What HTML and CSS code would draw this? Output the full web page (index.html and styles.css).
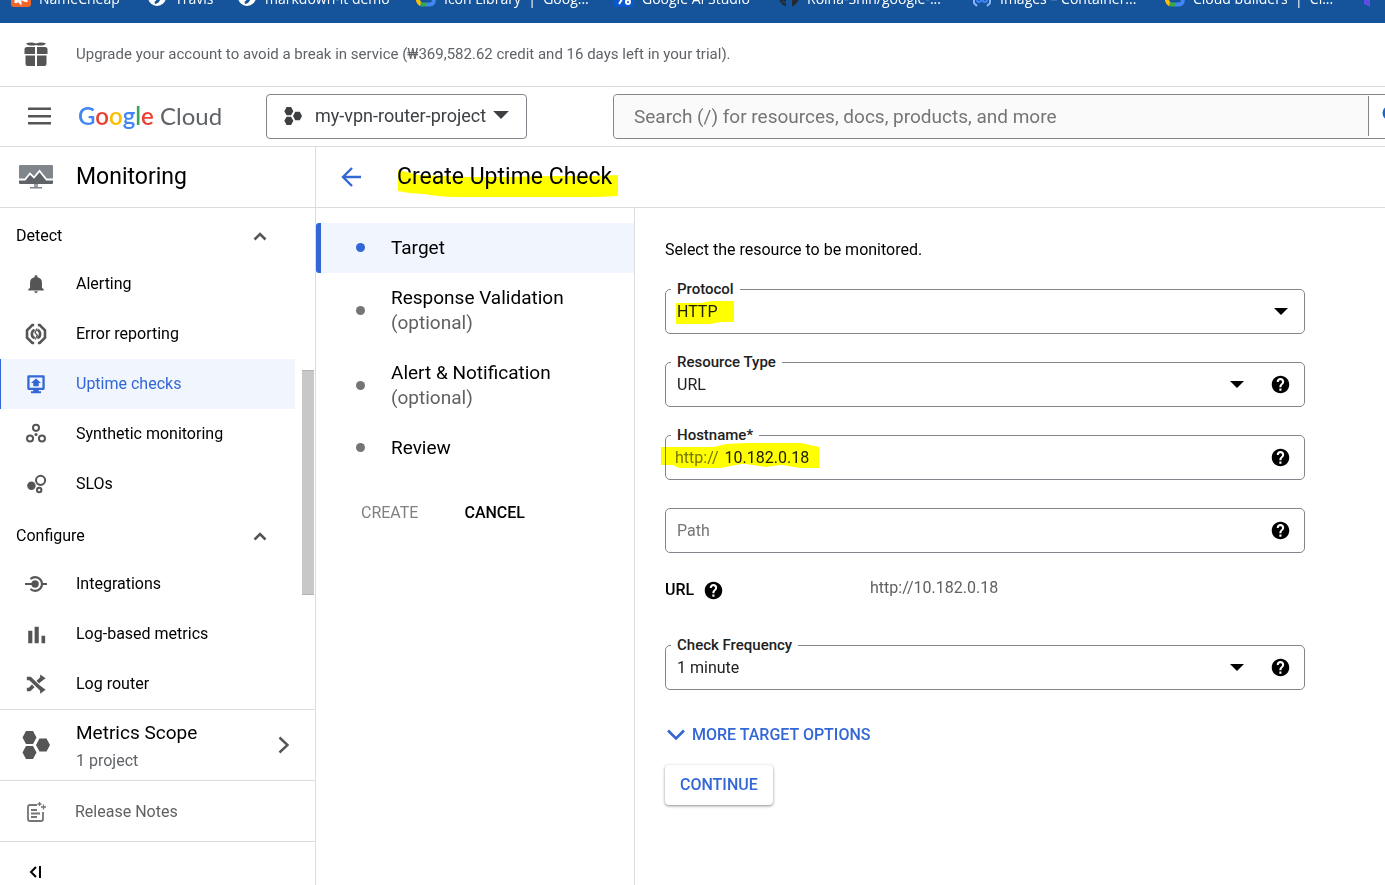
FILE: index.html
```html
<!DOCTYPE html>
<html lang="en">
<head>
<meta charset="utf-8">
<title>Create Uptime Check – Monitoring – Google Cloud</title>
<link rel="stylesheet" href="styles.css">
</head>
<body>
<svg class="sprite" aria-hidden="true">
  <symbol id="help" viewBox="0 0 24 24"><circle cx="12" cy="12" r="10" fill="#fff"/><path d="M12 2C6.480 2 2 6.480 2 12s4.480 10 10 10 10-4.480 10-10S17.520 2 12 2zm1.100 17h-2.400v-2.300h2.400V19zm2.100-7.700-.9.900c-.8.800-1.200 1.400-1.200 2.800h-2.400v-.5c0-1.100.5-2.100 1.200-2.800l1.300-1.300c.4-.3.6-.8.600-1.400 0-1.100-.8-1.900-1.900-1.900s-1.900.8-1.900 1.900H7.700C7.700 6.500 9.600 4.700 12 4.700s4.200 1.900 4.200 4.200c0 .9-.4 1.800-1 2.400z"/></symbol>
  <symbol id="caret" viewBox="0 0 14 8"><path d="M0 0h14L7 7z"/></symbol>
  <symbol id="chevron-up" viewBox="0 0 14 9"><path d="M1.500 7.500 7 2l5.500 5.500" fill="none" stroke="#555" stroke-width="2.600"/></symbol>
  <symbol id="hexes" viewBox="0 0 28 28"><path d="M4 0h7l3.500 6.500L11 13H4L.5 6.500zM4 15h7l3.500 6.500L11 28H4L.5 21.500zM17.500 7.500h7L28 14l-3.500 6.500h-7L14 14z"/></symbol>
  <symbol id="gcloud" viewBox="0 0 20 20"><path d="M4 5 10 2l6 4" fill="none" stroke="#ea4335" stroke-width="4"/><path d="M5 5C0 8 1 15 5 17.500" fill="none" stroke="#fbbc04" stroke-width="4"/><path d="M4.500 17.500H11" stroke="#34a853" stroke-width="4"/><path d="M10.500 17.500H14c5 0 5-8 1-10" fill="none" stroke="#4285f4" stroke-width="4"/></symbol>
  <symbol id="globe" viewBox="0 0 20 20"><circle cx="10" cy="10" r="9" fill="#fff"/><path d="M6 9h8v3l-3 4-3 1-.5-2 2-2z" fill="#15539a"/></symbol>
</svg>

<nav class="bookmarks" aria-label="Bookmarks">
  <a href="#"><svg viewBox="0 0 20 20"><rect width="20" height="20" rx="3" fill="#f1672b"/><path d="M5 16v-5l4 4v-5M12 14l3-5v6" fill="none" stroke="#fff" stroke-width="3"/></svg><span>NameCheap</span></a>
  <a href="#"><svg><use href="#globe"/></svg><span>Travis</span></a>
  <a href="#"><svg><use href="#globe"/></svg><span>markdown-it demo</span></a>
  <a href="#"><svg><use href="#gcloud"/></svg><span>Icon Library&nbsp; |&nbsp; Goog...</span></a>
  <a href="#"><svg viewBox="0 0 20 20"><rect width="20" height="20" rx="2" fill="#0b57d0"/><path d="m5 17 5-8 2 4" fill="none" stroke="#fff" stroke-width="2"/><circle cx="14" cy="15" r="2" fill="none" stroke="#fff" stroke-width="2"/></svg><span>Google AI Studio</span></a>
  <a href="#"><svg viewBox="0 0 20 20"><path d="M10 0a10 10 0 0 0-3 19.500V16c-3 .5-3-2-4-2 2-1 2 1.500 4 1v-2C1 12 3 4 5 3l2 1h6l2-1c3 2 3 9-2 10v6.500A10 10 0 0 0 10 0z" fill="#24292f"/></svg><span>Roina-Shin/google-...</span></a>
  <a href="#"><svg viewBox="0 0 20 20" fill="none" stroke="#8ab4f8" stroke-width="2"><path d="M5 1H2v15l3 3M15 1h3v15l-3 3"/><circle cx="7" cy="13" r="2" stroke="#4285f4"/><circle cx="13" cy="13" r="2" stroke="#4285f4"/></svg><span>Images – Container...</span></a>
  <a href="#"><svg><use href="#gcloud"/></svg><span>Cloud builders&nbsp; |&nbsp; Cl...</span></a>
  <a href="#" aria-label="Terraform"><svg viewBox="0 0 20 20"><path d="M1 10l6 3v7l-6-3z" fill="#5c4ee5"/></svg></a>
</nav>

<div class="banner">
  <svg class="banner-icon" viewBox="0 0 24 24" fill="#555"><path d="M3 5h8v7H.5V7.500Q.5 5 3 5zM13 5h8q2.500 0 2.500 2.500V12H13zM1.500 13.500H11V24H3.500q-2 0-2-2zM13 13.500h9.500V22q0 2-2 2H13z"/><path d="M2 1.500C5 0 9 0 12 1.500 15 0 19 0 22 1.500 20 4 15 4 12 3 9 4 4 4 2 1.500z"/></svg>
  <span>Upgrade your account to avoid a break in service (₩369,582.62 credit and 16 days left in your trial).</span>
</div>

<header class="topbar">
  <button class="icon-btn menu" aria-label="Main menu"><svg width="24" height="19" viewBox="0 0 24 19"><path d="M1 1.800h23M1 9.300h23M1 16.200h23" stroke="#555" stroke-width="2.400"/></svg></button>
  <a class="logo" href="#" aria-label="Google Cloud"><span class="google"><span class="b">G</span><span class="r">o</span><span class="y">o</span><span class="b">g</span><span class="g">l</span><span class="r">e</span></span> Cloud</a>
  <button class="project"><svg class="project-hex" fill="#3c4043"><use href="#hexes"/></svg><span>my-vpn-router-project</span><svg class="project-caret" fill="#3c4043"><use href="#caret"/></svg></button>
  <div class="search">
    <input type="text" aria-label="Search" placeholder="Search (/) for resources, docs, products, and more">
    <button aria-label="Search"><svg width="22" height="22" viewBox="0 0 22 22" fill="none" stroke="#1967d2" stroke-width="3"><circle cx="8" cy="8" r="6"/><path d="m12 12 8 8"/></svg></button>
  </div>
</header>

<div class="shell">
  <aside class="sidebar">
    <div class="product">
      <svg width="34" height="24" viewBox="0 0 34 24"><path d="M1 0h32q1 0 1 1v13H0V1q0-1 1-1z" fill="#80868b"/><path d="m0 14 6-.5L12 8l3 3 6-5 7 8h6v4q0 1-1 1H1q-1 0-1-1z" fill="#5f6368"/><path d="M0 14.500h6L11 8.500l4 4L20.500 6l7 8.500H34" fill="none" stroke="#fff" stroke-width="1.800"/><path d="M15 19h4v3h-4z" fill="#9aa0a6"/><path d="M11 22h12v1.500H11z" fill="#80868b"/></svg>
      <span>Monitoring</span>
    </div>
    <div class="nav-area">
      <nav class="nav" aria-label="Monitoring">
        <button class="nav-group">Detect<svg><use href="#chevron-up"/></svg></button>
        <a href="#"><svg viewBox="0 0 24 24" fill="#555"><path d="M12 2.500a1.600 1.600 0 0 1 1.600 1.600v.6A6 6 0 0 1 18.500 10.500V16l2 2v1h-17v-1l2-2v-5.500A6 6 0 0 1 10.400 4.700v-.6A1.600 1.600 0 0 1 12 2.500zM10 20h4q-.5 2-2 2t-2-2z"/></svg>Alerting</a>
        <a href="#"><svg viewBox="0 0 24 24" fill="none" stroke="#555" stroke-width="2.800"><path d="M10 2.200H8L2.200 8v8L8 21.800h2M14 2.200h2L21.800 8v8L16 21.800h-2"/><path d="M10.500 7.500Q7.500 8.500 7.500 12t3 4.500M13.500 7.500q3 1 3 4.500t-3 4.500" stroke-width="2.800"/><path d="m13 6-2 4.500 2.500 3L11 18" stroke-width="1.400"/></svg>Error reporting</a>
        <a href="#" class="active" aria-current="page"><svg viewBox="0 0 24 24" fill="#3367d6"><path fill-rule="evenodd" d="M4 2.500h16q1.500 0 1.500 1.500v13q0 1.500-1.500 1.500h-5V20h2.500v2h-11v-2H9v-1.500H4Q2.500 18.500 2.500 17V4Q2.500 2.500 4 2.500zM5 5v11h14V5z"/><path d="m12 6-5.500 5H9v3.500h6V11h2.500z"/></svg>Uptime checks</a>
        <a href="#"><svg viewBox="0 0 24 24" fill="none" stroke="#555" stroke-width="2.200"><circle cx="12" cy="5.300" r="3.300"/><circle cx="5.500" cy="17" r="3.300"/><circle cx="18.500" cy="17" r="3.300"/><circle cx="12" cy="12.600" r="1.700" fill="#555" stroke="none"/></svg>Synthetic monitoring</a>
        <a href="#"><svg viewBox="0 0 24 24" fill="none" stroke="#555" stroke-width="2.200"><circle cx="7" cy="14" r="4.600" fill="#555" stroke="none"/><circle cx="17" cy="8" r="5"/><circle cx="15.500" cy="18.500" r="2.400"/></svg>SLOs</a>
        <button class="nav-group">Configure<svg><use href="#chevron-up"/></svg></button>
        <a href="#"><svg viewBox="0 0 24 24" fill="none" stroke="#555" stroke-width="2.400"><circle cx="11" cy="12" r="4" fill="#555" stroke="none"/><path d="M0 12h9M18 12h6M6 6.500a7.500 7.500 0 1 1 0 11"/></svg>Integrations</a>
        <a href="#"><svg viewBox="0 0 24 24" fill="#555"><path d="M3.500 8.500H8V22H3.500zM10.500 4H15v18h-4.500zM18 14h4v8h-4z"/></svg>Log-based metrics</a>
        <a href="#"><svg viewBox="0 0 24 24" fill="none" stroke="#555" stroke-width="4"><path d="M2 6h3.500l12.500 12M2 18h3l4-4M14 10l4-4"/><path d="M16.500 1.500v8.500L22.500 5.800zM16.500 14v8.500l6-4.200z" fill="#555" stroke="none"/></svg>Log router</a>
      </nav>
      <div class="scroll-thumb"></div>
    </div>
    <a class="scope" href="#">
      <svg class="scope-hex" fill="#555"><use href="#hexes"/></svg>
      <span class="scope-text"><span class="scope-name">Metrics Scope</span><span class="scope-count">1 project</span></span>
      <svg width="12" height="18" viewBox="0 0 12 18"><path d="m1.500 1.500 8 7.500-8 7.500" fill="none" stroke="#555" stroke-width="2.400"/></svg>
    </a>
    <a class="release" href="#"><svg width="20" height="20" viewBox="0 0 20 20" fill="none" stroke="#757575" stroke-width="1.800"><path d="M11 3H4Q2 3 2 5v12q0 2 2 2h11q2 0 2-2v-7M5 8h6M5 11.500h9M5 15h6"/><path d="M13.500 0v4M11.500 2h4M17.500 2.500v5M15 5h5" stroke-width="1.300"/></svg>Release Notes</a>
    <button class="icon-btn collapse" aria-label="Hide navigation"><svg width="14" height="14" viewBox="0 0 14 14" fill="none" stroke="#000" stroke-width="2"><path d="M7 2 2 7l5 5M11 1v12"/></svg></button>
  </aside>

  <main class="page">
    <div class="page-head">
      <a class="back" href="#" aria-label="Back"><svg width="20" height="20" viewBox="0 0 20 20" fill="none" stroke="#3367d6" stroke-width="2.400"><path d="M20 10H2M11 1l-9 9 9 9"/></svg></a>
      <h1 class="marked">Create Uptime Check<svg class="marker marker-title" viewBox="0 0 222 32"><path d="M1 4 21 9l50 2h40l40-1h50l20-1v21l-20 1H55l-15-1-13-2-15-1-11-2z"/></svg></h1>
    </div>
    <div class="columns">
      <section class="stepper">
        <ol>
          <li class="current"><i></i><span>Target</span></li>
          <li><i></i><span>Response Validation <small>(optional)</small></span></li>
          <li><i></i><span>Alert &amp; Notification <small>(optional)</small></span></li>
          <li><i></i><span>Review</span></li>
        </ol>
        <div class="actions"><button disabled>CREATE</button><button>CANCEL</button></div>
      </section>
      <form class="form">
        <p class="intro">Select the resource to be monitored.</p>
        <div class="field">
          <label for="protocol">Protocol</label>
          <select id="protocol"><option>HTTP</option></select>
          <svg class="caret"><use href="#caret"/></svg>
          <svg class="marker marker-http" viewBox="0 0 58 24"><path d="M0 2h24l12-2h22v21H45l-11 2H0z"/></svg>
        </div>
        <div class="field">
          <label for="type">Resource Type</label>
          <select id="type"><option>URL</option></select>
          <svg class="caret"><use href="#caret"/></svg>
          <button type="button" class="help" aria-label="About resource type"><svg><use href="#help"/></svg></button>
        </div>
        <div class="field">
          <label for="host">Hostname*</label>
          <span class="prefix">http://</span>
          <input id="host" type="text" value="10.182.0.18">
          <button type="button" class="help" aria-label="About hostname"><svg><use href="#help"/></svg></button>
          <svg class="marker marker-host" viewBox="0 0 159 26"><path d="M0 4h53l12-3 20-1h55l18 4v21h-18l-20-3-15 2-20-3H80l-20 4H18l-6-3H0z"/></svg>
        </div>
        <div class="field">
          <input type="text" class="path" aria-label="Path" placeholder="Path">
          <button type="button" class="help" aria-label="About path"><svg><use href="#help"/></svg></button>
        </div>
        <div class="url-row">
          <span class="url-name">URL <button type="button" class="help" aria-label="About URL"><svg><use href="#help"/></svg></button></span>
          <output>http://10.182.0.18</output>
        </div>
        <div class="field">
          <label for="freq">Check Frequency</label>
          <select id="freq"><option>1 minute</option></select>
          <svg class="caret"><use href="#caret"/></svg>
          <button type="button" class="help" aria-label="About check frequency"><svg><use href="#help"/></svg></button>
        </div>
        <button type="button" class="more"><svg width="18" height="12" viewBox="0 0 18 12"><path d="m1 1.500 8 8 8-8" fill="none" stroke="#3367d6" stroke-width="2.600"/></svg>MORE TARGET OPTIONS</button>
        <button type="button" class="continue">CONTINUE</button>
      </form>
    </div>
  </main>
</div>
</body>
</html>
```

FILE: styles.css
```css
* { box-sizing: border-box; }

body {
  margin: 0;
  height: 100vh;
  overflow: hidden;
  display: flex;
  flex-direction: column;
  background: #fff;
  color: #000;
  font: 16px/20px Roboto, sans-serif;
}

a { color: inherit; text-decoration: none; }
button, input, select { font: inherit; color: inherit; }
button { border: 0; padding: 0; background: none; cursor: pointer; }
svg { display: block; flex: none; }
.sprite { position: absolute; width: 0; height: 0; }
.icon-btn { display: flex; align-items: center; }

/* Bookmarks */
.bookmarks {
  flex: none;
  height: 23px;
  padding-left: 11px;
  overflow: hidden;
  display: grid;
  grid-template-columns: 136px 90px 179px 198px 165px 193px 193px 198px 20px;
  grid-template-rows: 23px;
  align-items: end;
  background: #15539a;
  color: #fff;
  font: 14px/20px "Open Sans", sans-serif;
}
.bookmarks a { display: flex; align-items: flex-end; gap: 8px; padding-bottom: 14px; white-space: nowrap; }
.bookmarks svg { width: 20px; height: 20px; margin-bottom: 2px; }

/* Trial banner */
.banner {
  flex: none;
  height: 64px;
  padding: 0 24px 2px;
  display: flex;
  align-items: center;
  gap: 28px;
  border-bottom: 1px solid #dadce0;
  color: #5f6368;
  font-size: 15px;
}
.banner-icon { width: 24px; height: 24px; }

/* Top bar */
.topbar {
  flex: none;
  height: 60px;
  padding-left: 27px;
  display: flex;
  align-items: center;
  overflow: hidden;
  border-bottom: 1px solid #dadce0;
}
.logo { width: 188px; margin-left: 27px; padding-bottom: 2px; font: 24px/32px Lato, sans-serif; color: #5f6368; white-space: nowrap; }
.google { font-weight: 600; }
.google .b { color: #4285f4; }
.google .r { color: #ea4335; }
.google .y { color: #fbbc04; }
.google .g { color: #34a853; }
.project {
  width: 261px;
  height: 45px;
  padding: 0 17px 2px;
  display: flex;
  align-items: center;
  border: 1px solid #80868b;
  border-radius: 4px;
  color: #3c4043;
  font-size: 18px;
}
.project span { flex: 1; margin-left: 13px; text-align: left; white-space: nowrap; }
.project-hex { width: 18px; height: 18px; }
.project-caret { width: 16px; height: 9px; }
.search {
  flex: 1;
  height: 45px;
  margin: 0 -100px 0 86px;
  display: flex;
  border: 1px solid #80868b;
  border-radius: 4px;
}
.search input {
  flex: 1;
  min-width: 0;
  padding: 0 20px;
  border: 0;
  background: #fafafa;
  border-radius: 4px 0 0 4px;
  font-size: 19px;
}
.search input::placeholder { color: #757575; opacity: 1; }
.search button { width: 116px; margin: 1px 0 2px; padding-left: 13px; border-left: 1px solid #80868b; }

/* Shell */
.shell { flex: 1; min-height: 0; display: flex; }
.sidebar { flex: none; width: 316px; display: flex; flex-direction: column; border-right: 1px solid #dadce0; }
.sidebar > * { flex: none; }
.product {
  height: 61px;
  padding: 0 19px;
  display: flex;
  align-items: center;
  gap: 23px;
  border-bottom: 1px solid #dadce0;
  font-size: 23px;
}
.nav-area { display: flex; justify-content: space-between; padding: 1px 1px 0 0; }
.nav { width: 295px; }
.nav a, .nav-group { height: 50px; display: flex; align-items: center; }
.nav a { gap: 29px; padding: 0 0 0 25px; }
.nav a svg { width: 22px; height: 22px; }
.nav a.active { padding-left: 24px; border-left: 1px solid #3367d6; background: #f0f5fe; color: #3367d6; }
.nav-group { width: 100%; justify-content: space-between; padding: 4px 28px 0 16px; }
.nav-group svg { width: 14px; height: 9px; }
.scroll-thumb { width: 12px; height: 225px; margin-top: 161px; background: #c8c8c8; border-top: 1px solid #b4b4b4; border-bottom: 1px solid #b4b4b4; }
.scope {
  height: 72px;
  padding: 0 25px 0 22px;
  display: flex;
  align-items: center;
  border-top: 1px solid #dadce0;
  border-bottom: 1px solid #dadce0;
}
.scope-hex { width: 28px; height: 28px; }
.scope-text { flex: 1; margin-left: 26px; padding-top: 4px; }
.scope-name, .scope-count { display: block; line-height: 28px; }
.scope-name { font-size: 19px; }
.scope-count { color: #5f6368; }
.release { height: 61px; padding: 2px 0 0 26px; display: flex; align-items: center; gap: 29px; border-bottom: 1px solid #dadce0; color: #616161; }
.collapse { height: 60px; padding-left: 29px; }

/* Page */
.page { flex: 1; min-width: 0; display: flex; flex-direction: column; }
.page-head { height: 61px; padding-left: 25px; display: flex; align-items: center; gap: 36px; border-bottom: 1px solid #dadce0; }
h1 { margin: 0; font-size: 23px; font-weight: 400; line-height: 30px; white-space: nowrap; }
.marked { position: relative; }
.marker { position: absolute; fill: #ff0; mix-blend-mode: multiply; pointer-events: none; }
.marker-title { left: 0; top: 4px; width: 222px; height: 32px; }
.marker-http { left: 10px; top: 11px; width: 58px; height: 24px; }
.marker-host { left: -5px; top: 7px; width: 159px; height: 26px; }
.columns { flex: 1; display: flex; }

.stepper { flex: none; width: 319px; padding-top: 15px; border-right: 1px solid #dadce0; font-size: 19px; line-height: 25px; }
.stepper ol { margin: 0; padding: 0; list-style: none; }
.stepper li { display: flex; align-items: center; gap: 26px; padding: 12px 60px 13px 40px; }
.stepper li.current { padding-left: 35px; border-left: 5px solid #3367d6; border-radius: 3px 0 0 3px; background: #f0f5fe; }
.stepper i { flex: none; width: 9px; height: 9px; border-radius: 50%; background: #757575; }
.stepper .current i { background: #3367d6; }
.stepper small { display: block; font-size: 19px; color: #616161; }
.actions { display: flex; gap: 46px; padding: 30px 45px; font-size: 16px; line-height: 20px; }
.actions button { font-weight: 500; }
.actions button:disabled { color: #808080; font-weight: 400; }

/* Form */
.form { flex: 1; max-width: 700px; padding: 32px 30px; }
.intro { margin: 0 0 29px; }
.field {
  position: relative;
  height: 45px;
  margin-bottom: 28px;
  padding: 0 13px 0 11px;
  display: flex;
  align-items: center;
  border: 1px solid #80868b;
  border-radius: 5px;
  color: #212121;
}
.field label { position: absolute; left: 5px; top: -11px; padding: 0 6px; background: #fff; font-size: 15px; font-weight: 500; }
.field select, .field input { flex: 1; min-width: 0; padding: 0; border: 0; background: none; appearance: none; outline: 0; }
.field .prefix { margin: 0 6px 0 -2px; color: #757575; }
.field .path::placeholder { color: #757575; opacity: 1; }
.caret { width: 14px; height: 8px; margin-right: 3px; }
.caret + .help { margin-left: 23px; }
.help svg { width: 21px; height: 21px; }
.help { display: inline-flex; }
.url-row { display: flex; height: 34px; margin: -8px 0 38px; align-items: center; }
.url-name { display: flex; align-items: center; gap: 9px; width: 205px; font-weight: 500; }
.url-row output { padding-bottom: 5px; color: #616161; }
.more, .continue { color: #3367d6; font-weight: 500; }
.more { display: flex; align-items: center; gap: 7px; margin: 35px 0 20px; padding-left: 2px; }
.continue { height: 40px; padding: 0 15px; border-radius: 4px; background: #fff; box-shadow: 0 1px 3px rgba(0, 0, 0, .45); }
```
